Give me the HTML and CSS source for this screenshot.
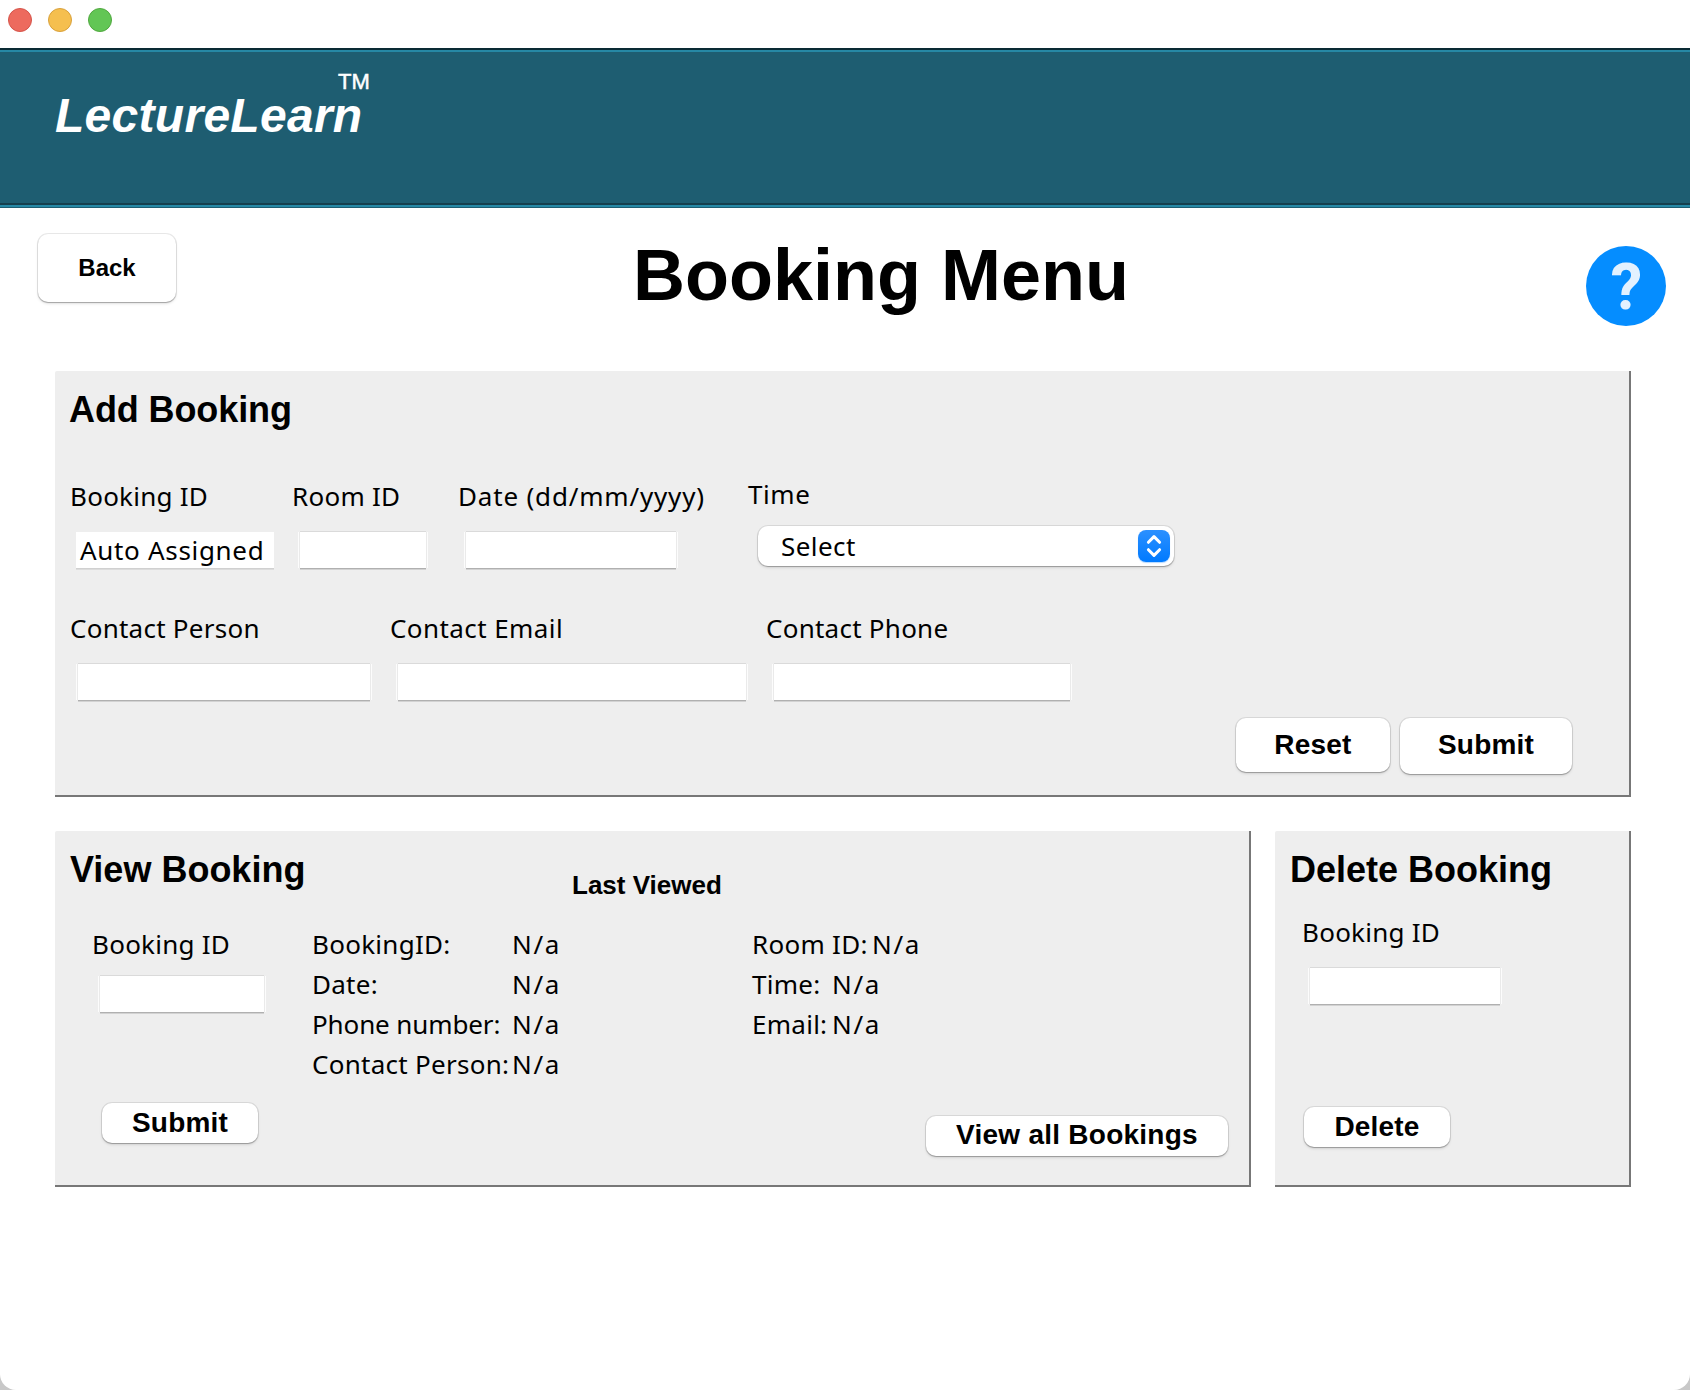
FILE: index.html
```html
<!DOCTYPE html>
<html lang="en">
<head>
<meta charset="utf-8">
<title>LectureLearn</title>
<link rel="stylesheet" href="styles.css">
</head>
<body>
<div class="window">
  <div class="titlebar">
    <span class="light light-close"></span>
    <span class="light light-min"></span>
    <span class="light light-max"></span>
  </div>
  <header class="banner">
    <span class="logo">LectureLearn</span><span class="tm">TM</span>
  </header>
  <div class="heading">
    <button class="btn btn-back">Back</button>
    <h1 class="page-title">Booking Menu</h1>
    <button class="help">?</button>
  </div>
  <main class="content">
    <section class="panel panel-add">
      <h2 class="panel-title panel-title-add">Add Booking</h2>
      <div class="fields row-one">
        <div class="field"><label class="label">Booking ID</label><div class="input input-auto"><span class="auto-text">Auto Assigned</span></div></div>
        <div class="field"><label class="label">Room ID</label><div class="input input-room"></div></div>
        <div class="field"><label class="label label-date">Date (dd/mm/yyyy)</label><div class="input input-date"></div></div>
        <div class="field field-time"><label class="label label-time">Time</label>
          <div class="select"><span class="select-text">Select</span>
            <span class="stepper"><svg width="32" height="32" viewBox="0 0 32 32" fill="none" stroke="#fff" stroke-width="3" stroke-linecap="round" stroke-linejoin="round"><path d="M10.4 12.3 16 6.6l5.600 5.700M10.400 19.700 16 25.400l5.600-5.700"/></svg></span>
          </div>
        </div>
      </div>
      <div class="fields row-two">
        <div class="field"><label class="label">Contact Person</label><div class="input input-person"></div></div>
        <div class="field"><label class="label label-email">Contact Email</label><div class="input input-email"></div></div>
        <div class="field"><label class="label">Contact Phone</label><div class="input input-phone"></div></div>
      </div>
      <div class="actions">
        <button class="btn btn-reset">Reset</button>
        <button class="btn btn-submit">Submit</button>
      </div>
    </section>
    <div class="lower">
      <section class="panel panel-view">
        <div class="view-left">
          <h2 class="panel-title">View Booking</h2>
          <div class="field"><label class="label">Booking ID</label><div class="input input-view"></div></div>
          <button class="btn btn-view-submit">Submit</button>
        </div>
        <div class="view-right">
          <h3 class="last-viewed">Last Viewed</h3>
          <div class="details">
            <div class="detail-list detail-list-main">
              <div class="detail"><span class="key">BookingID:</span><span class="value">N/a</span></div>
              <div class="detail"><span class="key">Date:</span><span class="value">N/a</span></div>
              <div class="detail"><span class="key key-phone">Phone number:</span><span class="value">N/a</span></div>
              <div class="detail"><span class="key">Contact Person:</span><span class="value">N/a</span></div>
            </div>
            <div class="detail-list">
              <div class="detail"><span class="key key-wide">Room ID:</span><span class="value">N/a</span></div>
              <div class="detail"><span class="key key-short">Time:</span><span class="value">N/a</span></div>
              <div class="detail"><span class="key key-short">Email:</span><span class="value">N/a</span></div>
            </div>
          </div>
          <button class="btn btn-all">View all Bookings</button>
        </div>
      </section>
      <section class="panel panel-delete">
        <h2 class="panel-title">Delete Booking</h2>
        <div class="field"><label class="label">Booking ID</label><div class="input input-delete"></div></div>
        <button class="btn btn-delete">Delete</button>
      </section>
    </div>
  </main>
</div>
</body>
</html>
```
FILE: styles.css
```css
* { box-sizing: border-box; }
body { margin: 0; background: #c8c8c8; color: #000; font-family: "Noto Sans", sans-serif; font-size: 26px; line-height: 36px; }
h1, h2, h3 { margin: 0; font-family: "Liberation Sans", Arial, sans-serif; font-weight: bold; }
.window { width: 1690px; height: 1390px; overflow: hidden; background: #fff; border-radius: 0 0 16px 16px; }

.titlebar { display: flex; gap: 16px; height: 48px; padding: 8px; }
.light { width: 24px; height: 24px; border-radius: 50%; border: 1px solid; }
.light-close { background: #ed6a5e; border-color: #d5544a; }
.light-min { background: #f5bf4f; border-color: #d9a13c; }
.light-max { background: #62c655; border-color: #50a83f; }

.banner { display: flex; align-items: flex-start; height: 160px; padding: 45px 0 0 55px; color: #fff; background: #1e5d71; font-family: "Liberation Sans", Arial, sans-serif;
  background-image: linear-gradient(to bottom, #0a2a34 0 2px, #2688a5 2px 4px, #1e5d71 4px 155px, #163f4d 155px 157px, #2688a5 157px 159px, #1e5d71 159px); }
.logo { font-size: 48px; line-height: 46px; font-weight: bold; font-style: italic; letter-spacing: .28px; width: 283px; white-space: nowrap; }
.tm { font-size: 22px; line-height: 20px; margin-top: -21px; -webkit-text-stroke: .5px #fff; }

.heading { display: flex; justify-content: space-between; align-items: flex-start; height: 163px; padding: 26px 24px 0 38px; }
.page-title { font-size: 72px; line-height: 80px; margin-top: 1px; }
.help { width: 80px; height: 80px; margin-top: 12px; padding: 4px 0 0 1px; border: 0; border-radius: 50%; background: #058dff; color: #e3f1ff; font: bold 64px/76px Roboto, sans-serif; }

.btn { display: block; padding: 0; border: 0; border-radius: 10px; background: #fff; color: #000; font: bold 28px/32px "Liberation Sans", Arial, sans-serif; letter-spacing: .2px; white-space: nowrap;
  box-shadow: 0 0 0 1px rgba(0,0,0,.09), 0 1px 1px rgba(0,0,0,.22), 0 2px 3px rgba(0,0,0,.1); }
.btn-back { width: 138px; height: 68px; font-size: 24px; letter-spacing: 0; }

.content { padding: 0 59px 0 55px; }
.panel { background: #eee; border-right: 2px solid #777; border-bottom: 2px solid #777; border-top-left-radius: 2px; }
.panel-title { font-size: 36px; line-height: 44px; white-space: nowrap; }
.panel-title-add { margin-left: -1px; letter-spacing: -.1px; }
.fields { display: flex; }
.label { display: block; white-space: nowrap; letter-spacing: .25px; }
.input { height: 36px; margin: 18px 0 0 8px; background: #fff; box-shadow: 0 1px 0 #b0b0b0, 0 2px 0 #d2d2d2, 0 -1px 0 #dadada, 1px 0 0 #eaeaea, -1px 0 0 #eaeaea, 2px 0 0 #fcfcfc, -2px 0 0 #fcfcfc; }

.panel-add { height: 426px; padding: 17px 57px 0 15px; }
.row-one { margin-top: 46px; }
.input-auto { width: 198px; margin-left: 6px; padding-left: 4px; box-shadow: 0 1px 0 #d0d0d0, 0 2px 0 #dcdcdc; }
.auto-text { display: block; line-height: 36px; letter-spacing: .68px; white-space: nowrap; }
.input-room { width: 126px; margin-right: 32px; }
.row-one .field:first-child { width: 222px; }
.input-date { width: 210px; margin-right: 72px; }
.label-date { width: 240px; letter-spacing: .82px; }
.field-time { margin-top: -2px; }
.label-time { letter-spacing: .6px; }
.select { display: flex; justify-content: space-between; align-items: flex-start; width: 416px; height: 40px; margin: 14px 0 0 10px; padding: 4px 4px 0 23px; border-radius: 10px; background: #fff; box-shadow: 0 0 0 1px rgba(0,0,0,.09), 0 1px 1px rgba(0,0,0,.22), 0 2px 3px rgba(0,0,0,.1); }
.select-text { margin-top: -2px; letter-spacing: .45px; }
.stepper { width: 32px; height: 32px; border-radius: 8px; background: linear-gradient(#2b90ff, #007aff); box-shadow: 0 1px 1px rgba(0,122,255,.3); }
.stepper svg { display: block; }
.row-two { margin-top: 42px; }
.label-email { letter-spacing: .42px; }
.input-person { width: 292px; margin-right: 20px; }
.input-email { width: 348px; margin-right: 20px; }
.input-phone { width: 296px; }
.actions { display: flex; justify-content: flex-end; gap: 10px; margin-top: 18px; }
.btn-reset { width: 154px; height: 54px; }
.btn-submit { width: 172px; height: 56px; padding-bottom: 2px; }

.lower { display: flex; justify-content: space-between; margin-top: 34px; }
.panel-view { display: flex; width: 1196px; height: 356px; padding: 17px 0 0 15px; }
.view-left { width: 242px; }
.view-left .field { margin: 34px 0 0 22px; }
.input-view { width: 164px; margin-top: 14px; }
.btn-view-submit { width: 156px; height: 40px; margin: 91px 0 0 32px; }
.view-right { padding-top: 22px; }
.last-viewed { font-size: 26px; line-height: 30px; padding-left: 260px; }
.details { display: flex; margin-top: 24px; height: 160px; line-height: 40px; }
.detail-list-main { width: 440px; }
.detail { display: flex; white-space: nowrap; }
.key { width: 200px; letter-spacing: .27px; }
.key-phone { letter-spacing: -.12px; }
.key-wide { width: 120px; }
.key-short { width: 80px; }
.value { letter-spacing: 1.7px; }
.btn-all { width: 302px; height: 40px; margin: 32px 0 0 614px; padding-bottom: 2px; letter-spacing: .25px; }
.panel-delete { width: 356px; height: 356px; padding: 17px 0 0 15px; }
.panel-delete .field { margin: 22px 0 0 12px; }
.input-delete { width: 190px; }
.btn-delete { width: 146px; height: 40px; margin: 103px 0 0 14px; }
```
